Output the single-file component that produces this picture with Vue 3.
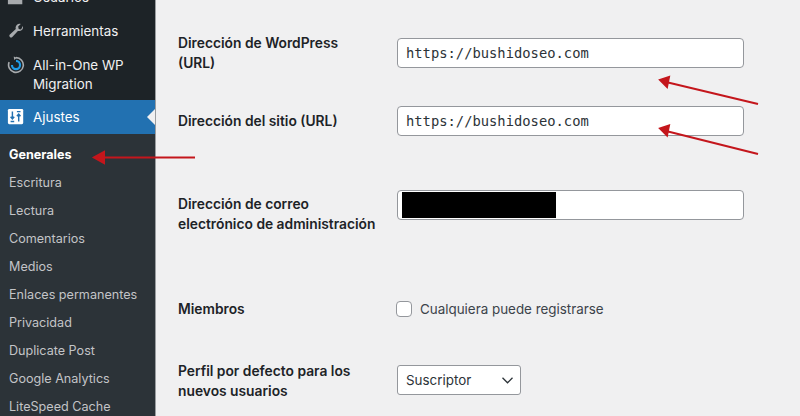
<script setup>
const submenu = [
  "Generales", "Escritura", "Lectura", "Comentarios", "Medios",
  "Enlaces permanentes", "Privacidad", "Duplicate Post", "Google Analytics", "LiteSpeed Cache",
];
</script>

<template>
  <div class="page">
    <aside class="sidebar">
      <div class="top-item">
        <svg class="ico" viewBox="0 0 20 20"><path d="M1 18v-5c0-2 1.500-3.500 3.500-3.500h9c2 0 3.500 1.500 3.500 3.500v5z" fill="#a7aaad" /></svg>
        <span>Usuarios</span>
      </div>
      <div class="top-item">
        <svg class="ico" viewBox="0 0 20 20">
          <path d="M17.600 4.400c.5 1.600.1 3.300-1.100 4.500-1.200 1.200-2.900 1.500-4.400 1L5.900 16.600c-.8.8-2 .8-2.700 0-.8-.8-.8-2 0-2.700l6.600-6.200c-.5-1.500-.2-3.200 1-4.400 1.200-1.200 2.900-1.600 4.500-1.100l-2.900 2.900.6 2.600 2.600.6z" fill="#a7aaad" />
        </svg>
        <span>Herramientas</span>
      </div>
      <div class="top-item tall">
        <svg class="ico" viewBox="0 0 20 20">
          <path d="M10 1.800a8.200 8.200 0 1 1-7.600 5" fill="none" stroke="#a7aaad" stroke-width="1.800" />
          <path d="M10 5.500a4.500 4.500 0 1 1-4.500 4.500" fill="none" stroke="#1f9ce8" stroke-width="2.400" />
          <path d="M7.500 0.500l3.500 1.500-3 2.500z" fill="#a7aaad" />
        </svg>
        <span>All-in-One WP<br />Migration</span>
      </div>
      <div class="top-item current">
        <svg class="ico" viewBox="0 0 20 20">
          <rect x="1" y="1" width="17" height="17" rx="1.500" fill="#fff" />
          <path d="M6 4v7.500M4 9.800l2 2.400 2-2.400M4 15h4M13 15V7.500M11 9.200l2-2.400 2 2.400M11 4h4" fill="none" stroke="#2271b1" stroke-width="1.600" />
        </svg>
        <span>Ajustes</span>
        <i class="notch"></i>
      </div>
      <ul class="submenu">
        <li v-for="(item, i) in submenu" :key="item" :class="{ active: i === 0 }">{{ item }}</li>
      </ul>
    </aside>

    <main class="content">
      <div class="row r1">
        <label class="lbl">Dirección de WordPress<br />(URL)</label>
        <div class="field mono">https://bushidoseo.com</div>
      </div>
      <div class="row r2">
        <label class="lbl">Dirección del sitio (URL)</label>
        <div class="field mono">https://bushidoseo.com</div>
      </div>
      <div class="row r3">
        <label class="lbl">Dirección de correo<br />electrónico de administración</label>
        <div class="field"><span class="redact"></span></div>
      </div>
      <div class="row r4">
        <label class="lbl">Miembros</label>
        <div class="check"><span class="box"></span><span>Cualquiera puede registrarse</span></div>
      </div>
      <div class="row r5">
        <label class="lbl">Perfil por defecto para los<br />nuevos usuarios</label>
        <div class="select">
          <span>Suscriptor</span>
          <svg width="11" height="7" viewBox="0 0 11 7"><path d="M0.500 0.800L5.500 5.800l5-5" fill="none" stroke="#2c3338" stroke-width="1.300" /></svg>
        </div>
      </div>
    </main>

    <svg class="arrows" width="800" height="416" viewBox="0 0 800 416">
      <g stroke="#c4161c" stroke-width="2" fill="#c4161c">
        <path d="M195 157.500H103" />
        <path d="M94 157.500l10-5.500v11z" />
        <path d="M758 104L668 82.500" />
        <path d="M660 80l9-3 -2 10z" />
        <path d="M758 154L668 131.500" />
        <path d="M660 128.500l9-3 -2 10z" />
      </g>
    </svg>
  </div>
</template>

<style>
html, body { margin: 0; padding: 0; background: #f0f0f1; }
</style>

<style scoped>
.page {
  position: relative;
  display: flex;
  width: 800px;
  height: 416px;
  overflow: hidden;
  background: #f0f0f1;
  font-family: Inter, "Liberation Sans", sans-serif;
  color: #1d2327;
}
.sidebar {
  width: 155px;
  flex: none;
  background: #1d2327;
  border-right: 1px solid #9a9da0;
  margin-top: -20px;
  color: #f0f0f1;
  font-size: 13.4px;
}
.top-item {
  position: relative;
  display: flex;
  align-items: center;
  gap: 8px;
  height: 34px;
  padding-left: 7px;
  line-height: 19px;
}
.top-item.tall {
  height: 52px;
  box-sizing: border-box;
  align-items: flex-start;
  padding-top: 8px;
}
.ico { width: 18px; height: 18px; flex: none; }
.top-item.current { background: #2271b1; color: #fff; }
.notch {
  position: absolute;
  right: 0;
  top: 9px;
  border: 8px solid transparent;
  border-right-color: #f0f0f1;
  border-left-width: 0;
}
.submenu {
  list-style: none;
  margin: 0;
  padding: 7px 0 0;
  background: #2c3338;
  color: #c3c4c7;
  font-size: 12.6px;
}
.submenu li {
  height: 28px;
  line-height: 28px;
  padding-left: 9px;
  white-space: nowrap;
}
.submenu li.active { color: #fff; font-weight: 700; }
.content {
  flex: 1;
  padding-left: 22px;
}
.row { display: flex; align-items: flex-start; }
.lbl {
  width: 219px;
  flex: none;
  font-size: 13.8px;
  font-weight: 600;
  line-height: 20px;
}
.field {
  width: 347px;
  height: 30px;
  box-sizing: border-box;
  background: #fff;
  border: 1px solid #94979c;
  border-radius: 4px;
  display: flex;
  align-items: center;
  padding-left: 8px;
  color: #2c3338;
}
.mono { font-family: "DejaVu Sans Mono", monospace; font-size: 13.8px; }
.r1 { padding-top: 33px; }
.r1 .field { margin-top: 5px; }
.r2 { padding-top: 33px; align-items: center; }
.r3 { padding-top: 54px; }
.r3 .field { padding-left: 4px; }
.r3 .lbl { padding-top: 4px; }
.redact { width: 154px; height: 26px; background: #000; }
.r4 { padding-top: 65px; align-items: center; }
.check { display: flex; align-items: center; gap: 8px; margin-left: -1px; font-size: 13.4px; color: #3c434a; }
.box {
  width: 16px;
  height: 16px;
  box-sizing: border-box;
  background: #fff;
  border: 1px solid #94979c;
  border-radius: 4px;
}
.r5 { padding-top: 42px; }
.select {
  margin-top: 4px;
  width: 124px;
  height: 30px;
  box-sizing: border-box;
  display: flex;
  align-items: center;
  justify-content: space-between;
  padding: 0 7px 0 8px;
  background: #fff;
  border: 1px solid #94979c;
  border-radius: 3px;
  font-size: 13.4px;
  color: #2c3338;
}
.arrows { position: absolute; left: 0; top: 0; pointer-events: none; }
</style>
